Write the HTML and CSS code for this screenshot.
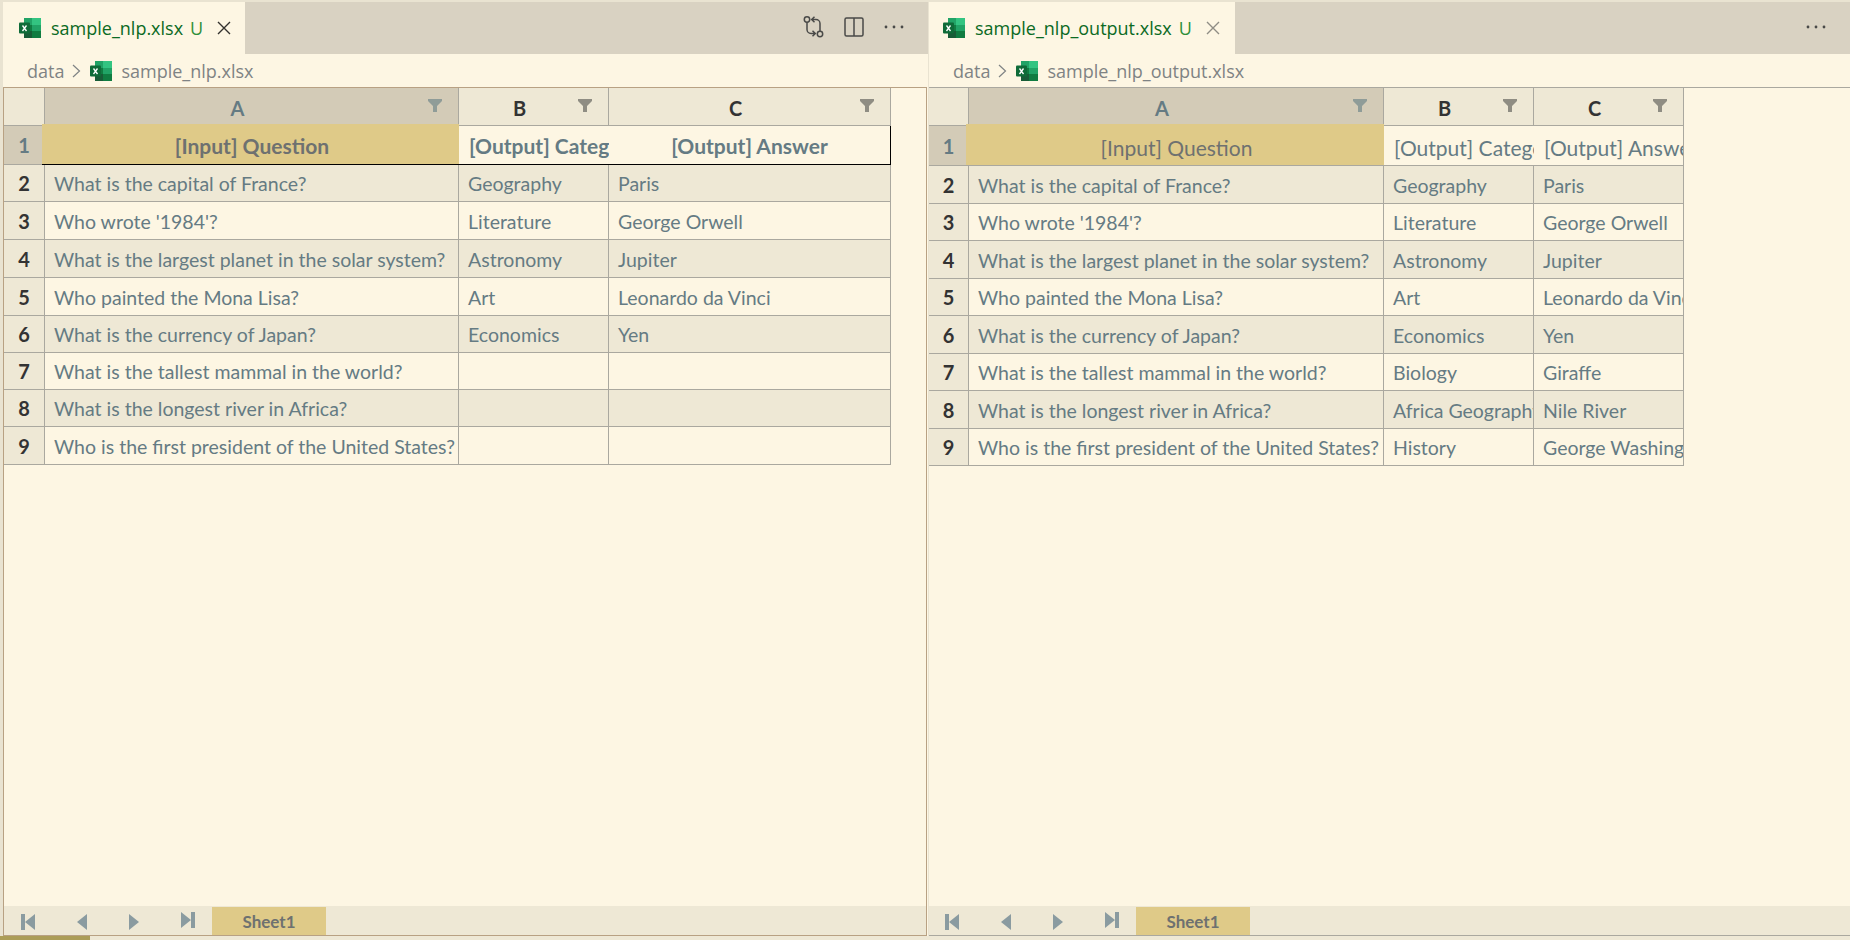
FILE: index.html
```html
<!DOCTYPE html>
<html lang="en">
<head>
<meta charset="utf-8">
<title>sample_nlp</title>
<link rel="stylesheet" href="styles.css">
</head>
<body>
<svg class="defs" width="0" height="0" aria-hidden="true">
  <defs>
    <symbol id="xl" viewBox="0 0 22 20">
      <rect x="5" y="0" width="9" height="7" fill="#21a366"/>
      <rect x="13" y="0" width="9" height="7" fill="#33c481"/>
      <rect x="5" y="7" width="9" height="6" fill="#107c41"/>
      <rect x="13" y="7" width="9" height="6" fill="#21a366"/>
      <rect x="5" y="13" width="9" height="7" fill="#185c37"/>
      <rect x="13" y="13" width="9" height="7" fill="#107c41"/>
      <rect x="0" y="4.500" width="11" height="11" rx="1" fill="#0f6b38"/>
      <path d="M3.500 7.500l4 5.500M7.500 7.500l-4 5.500" stroke="#fff" stroke-width="1.300" fill="none"/>
    </symbol>
    <symbol id="fn" viewBox="0 0 14 13">
      <path d="M0 0h14v2L9 7v6H5V7L0 2z"/>
    </symbol>
    <symbol id="x" viewBox="0 0 14 14">
      <path d="M1 1l12 12M13 1L1 13" stroke="currentColor" stroke-width="1.400" fill="none"/>
    </symbol>
    <symbol id="chev" viewBox="0 0 9 14">
      <path d="M1 1l6.500 6L1 13" stroke="#7f8384" stroke-width="1.200" fill="none"/>
    </symbol>
    <symbol id="dots" viewBox="0 0 20 4">
      <circle cx="2" cy="2" r="1.400"/><circle cx="10" cy="2" r="1.400"/><circle cx="18" cy="2" r="1.400"/>
    </symbol>
    <symbol id="first" viewBox="0 0 14 16">
      <path d="M0 0h4v16H0zM14 0v16L4 8z"/>
    </symbol>
    <symbol id="prev" viewBox="0 0 10 16">
      <path d="M10 0v16L0 8z"/>
    </symbol>
    <symbol id="next" viewBox="0 0 10 16">
      <path d="M0 0v16l10-8z"/>
    </symbol>
    <symbol id="last" viewBox="0 0 14 16">
      <path d="M0 0l10 8-10 8zM10 0h4v16h-4z"/>
    </symbol>
  </defs>
</svg>

<div class="panes">
  <section class="pane pane-a">
    <header class="tabbar">
      <div class="tab tab-a">
        <svg class="xl"><use href="#xl"/></svg>
        <span class="tab-name">sample_nlp.xlsx</span>
        <span class="tab-u">U</span>
        <svg class="tab-x tab-x-on"><use href="#x"/></svg>
      </div>
      <div class="actions">
        <svg class="act-compare" viewBox="0 0 22 22" fill="none" stroke="#4a4a48" stroke-width="1.500">
          <circle cx="5" cy="3.500" r="2.700"/>
          <circle cx="18" cy="18" r="2.700"/>
          <path d="M5 6.200v7.300a4 4 0 0 0 4 4h4.500M10.500 14.800l2.800 2.700-2.800 2.700"/>
          <path d="M18 15.300V7.500a4 4 0 0 0-4-4H9.500M12.500 .8L9.700 3.500l2.800 2.700"/>
        </svg>
        <svg class="act-split" viewBox="0 0 20 20" fill="none" stroke="#4a4a48" stroke-width="1.500">
          <rect x="1" y="1" width="18" height="18" rx="1.500"/>
          <path d="M10 1v18"/>
        </svg>
        <svg class="act-dots"><use href="#dots"/></svg>
      </div>
    </header>
    <nav class="crumbs">
      <span>data</span>
      <svg class="chev"><use href="#chev"/></svg>
      <svg class="xl"><use href="#xl"/></svg>
      <span class="crumb-file">sample_nlp.xlsx</span>
    </nav>
    <div class="sheet">
      <div class="grid">
        <div class="c corner"></div>
        <div class="c col col-sel">A<svg class="fn"><use href="#fn"/></svg></div>
        <div class="c col">B<svg class="fn"><use href="#fn"/></svg></div>
        <div class="c col">C<svg class="fn"><use href="#fn"/></svg></div>

        <div class="c row row-sel">1</div>
        <div class="c gold bold">[Input] Question</div>
        <div class="c t1 bold t1-left">[Output] Category</div>
        <div class="c t1 t1-end bold t1-center">[Output] Answer</div>

        <div class="c row">2</div>
        <div class="c alt">What is the capital of France?</div>
        <div class="c alt">Geography</div>
        <div class="c alt">Paris</div>

        <div class="c row">3</div>
        <div class="c">Who wrote '1984'?</div>
        <div class="c">Literature</div>
        <div class="c">George Orwell</div>

        <div class="c row">4</div>
        <div class="c alt">What is the largest planet in the solar system?</div>
        <div class="c alt">Astronomy</div>
        <div class="c alt">Jupiter</div>

        <div class="c row">5</div>
        <div class="c">Who painted the Mona Lisa?</div>
        <div class="c">Art</div>
        <div class="c">Leonardo da Vinci</div>

        <div class="c row">6</div>
        <div class="c alt">What is the currency of Japan?</div>
        <div class="c alt">Economics</div>
        <div class="c alt">Yen</div>

        <div class="c row">7</div>
        <div class="c">What is the tallest mammal in the world?</div>
        <div class="c"></div>
        <div class="c"></div>

        <div class="c row">8</div>
        <div class="c alt">What is the longest river in Africa?</div>
        <div class="c alt"></div>
        <div class="c alt"></div>

        <div class="c row">9</div>
        <div class="c">Who is the first president of the United States?</div>
        <div class="c"></div>
        <div class="c"></div>
      </div>
      <footer class="sheetbar">
        <div class="navs">
          <svg class="nav-w"><use href="#first"/></svg>
          <svg class="nav-n"><use href="#prev"/></svg>
          <svg class="nav-n"><use href="#next"/></svg>
          <svg class="nav-w nav-up"><use href="#last"/></svg>
        </div>
        <div class="sheet-tab">Sheet1</div>
      </footer>
    </div>
  </section>

  <section class="pane pane-b">
    <header class="tabbar">
      <div class="tab tab-b">
        <svg class="xl"><use href="#xl"/></svg>
        <span class="tab-name">sample_nlp_output.xlsx</span>
        <span class="tab-u">U</span>
        <svg class="tab-x"><use href="#x"/></svg>
      </div>
      <div class="actions">
        <svg class="act-dots"><use href="#dots"/></svg>
      </div>
    </header>
    <nav class="crumbs">
      <span>data</span>
      <svg class="chev"><use href="#chev"/></svg>
      <svg class="xl"><use href="#xl"/></svg>
      <span class="crumb-file">sample_nlp_output.xlsx</span>
    </nav>
    <div class="sheet">
      <div class="grid">
        <div class="c corner"></div>
        <div class="c col col-sel">A<svg class="fn"><use href="#fn"/></svg></div>
        <div class="c col">B<svg class="fn"><use href="#fn"/></svg></div>
        <div class="c col">C<svg class="fn"><use href="#fn"/></svg></div>

        <div class="c row row-sel">1</div>
        <div class="c gold low">[Input] Question</div>
        <div class="c t1 low t1-left">[Output] Category</div>
        <div class="c t1 low t1-left t1-last">[Output] Answer</div>

        <div class="c row">2</div>
        <div class="c alt">What is the capital of France?</div>
        <div class="c alt">Geography</div>
        <div class="c alt">Paris</div>

        <div class="c row">3</div>
        <div class="c">Who wrote '1984'?</div>
        <div class="c">Literature</div>
        <div class="c">George Orwell</div>

        <div class="c row">4</div>
        <div class="c alt">What is the largest planet in the solar system?</div>
        <div class="c alt">Astronomy</div>
        <div class="c alt">Jupiter</div>

        <div class="c row">5</div>
        <div class="c">Who painted the Mona Lisa?</div>
        <div class="c">Art</div>
        <div class="c">Leonardo da Vinci</div>

        <div class="c row">6</div>
        <div class="c alt">What is the currency of Japan?</div>
        <div class="c alt">Economics</div>
        <div class="c alt">Yen</div>

        <div class="c row">7</div>
        <div class="c">What is the tallest mammal in the world?</div>
        <div class="c">Biology</div>
        <div class="c">Giraffe</div>

        <div class="c row">8</div>
        <div class="c alt">What is the longest river in Africa?</div>
        <div class="c alt">Africa Geography</div>
        <div class="c alt">Nile River</div>

        <div class="c row">9</div>
        <div class="c">Who is the first president of the United States?</div>
        <div class="c">History</div>
        <div class="c">George Washington</div>
      </div>
      <footer class="sheetbar">
        <div class="navs">
          <svg class="nav-w"><use href="#first"/></svg>
          <svg class="nav-n"><use href="#prev"/></svg>
          <svg class="nav-n"><use href="#next"/></svg>
          <svg class="nav-w nav-up"><use href="#last"/></svg>
        </div>
        <div class="sheet-tab">Sheet1</div>
      </footer>
    </div>
  </section>
</div>
<div class="progress"><div class="progress-fill"></div></div>
</body>
</html>
```
FILE: styles.css
```css
* { box-sizing: border-box; }
html, body { margin: 0; height: 100%; }
body {
  width: 1850px;
  height: 940px;
  overflow: hidden;
  background: #e9e3d1;
  display: flex;
  flex-direction: column;
  padding-top: 2px;
  font-family: "Open Sans", sans-serif;
}
.defs { position: absolute; }

.panes { flex: 1; min-height: 0; display: flex; padding-left: 3px; gap: 1px; }
.pane { display: flex; flex-direction: column; min-width: 0; background: #fdf6e3; }
.pane-a { width: 925px; }
.pane-b { flex: 1; }

.tabbar { height: 52px; flex: none; display: flex; justify-content: space-between; background: #d9d2c2; }
.tab { display: flex; align-items: center; background: #fdf6e3; }
.tab-a { width: 242px; padding-left: 16px; }
.tab-b { width: 306px; padding-left: 14px; }
.xl { width: 22px; height: 20px; flex: none; }
.tab-name { margin-left: 10px; font-size: 18px; color: #0b6a23; white-space: nowrap; }
.tab-u { margin-left: 7px; font-size: 18px; color: #2f8f3a; }
.tab-x { width: 14px; height: 14px; margin-left: 14px; color: #8f8d85; }
.tab-x-on { color: #33322e; }

.actions { display: flex; align-items: center; padding-bottom: 3px; padding-right: 24px; gap: 20px; }
.act-compare { width: 22px; height: 22px; }
.act-split { width: 20px; height: 20px; }
.act-dots { width: 20px; height: 4px; fill: #4a4a48; }

.crumbs { height: 33px; flex: none; display: flex; align-items: center; font-size: 18px; color: #7f8384; padding-left: 24px; }
.chev { width: 9px; height: 14px; margin: 0 9px 0 8px; }
.crumb-file { margin-left: 9px; }

.sheet { flex: 1; min-height: 0; display: flex; flex-direction: column; justify-content: space-between; }
.pane-a .sheet { border: 1px solid #b8a183; margin-right: 1px; }
.pane-b .sheet { border-top: 1px solid #aaa89f; border-bottom: 1px solid #aaa89f; }

.grid { display: grid; font-family: Lato, sans-serif; font-size: 19.5px; color: #657b83; }
.pane-a .grid {
  grid-template-columns: 41px 414px 150px 282px;
  grid-template-rows: 38px 39px 37px 38px 38px 38px 37px 37px 37px 38px;
}
.pane-b .grid {
  grid-template-columns: 40px 415px 150px 150px;
  grid-template-rows: 38px 40px 38px 37px 38px 37px 38px 37px 38px 37px;
}

.c {
  display: flex;
  align-items: center;
  padding-left: 9px;
  padding-top: 1px;
  min-width: 0;
  overflow: hidden;
  white-space: nowrap;
  border-right: 1px solid #aaa89f;
  border-bottom: 1px solid #aaa89f;
}
.alt { background: #eee8d5; }
.corner { background: #eee8d5; padding: 0; }
.col {
  position: relative;
  justify-content: center;
  padding: 3px 28px 0 0;
  font-size: 20px;
  font-weight: 700;
  color: #333;
  background: #eee8d5;
}
.col-sel { background: #d3cbb7; color: #657b83; }
.fn { position: absolute; right: 16px; top: 11px; width: 14px; height: 13px; fill: #8f8d83; }
.col-sel .fn { fill: #8f9c98; }
.row { justify-content: center; padding: 0; font-size: 20px; font-weight: 700; color: #333; background: #eee8d5; }
.row-sel { background: #d3cbb7; color: #657b83; }
.gold {
  position: relative;
  margin: -2px 0 0 -3px;
  padding: 3px 0 0 3px;
  justify-content: center;
  font-size: 21px;
  background: #dfca88;
  color: #6e7170;
  border-right: 0;
  border-bottom-color: #000;
  overflow: visible;
}
.bold { font-weight: 700; }
.t1 { border-right: 0; font-size: 21px; padding-top: 1px; }
.low { padding-top: 4px; }
.gold.low { padding-top: 6px; border-bottom-color: #aaa89f; }
.t1-left { padding-left: 10px; }
.pane-a .t1-left { border-bottom-color: #000; }
.t1-center { justify-content: center; padding-left: 0; }
.t1-end { border-right: 1px solid #000; border-bottom-color: #000; }
.t1-last { border-right: 1px solid #aaa89f; }

.sheetbar { height: 29px; flex: none; display: flex; background: #eee8d5; }
.navs { display: flex; align-items: center; gap: 42px; padding-left: 17px; margin-right: 17px; padding-top: 2px; }
.pane-b .navs { padding-left: 16px; }
.nav-w { width: 14px; height: 16px; fill: #8a9ba0; }
.nav-n { width: 10px; height: 16px; fill: #8a9ba0; }
.nav-up { margin-top: -4px; }
.sheet-tab {
  width: 114px;
  margin-top: 1px;
  display: flex;
  align-items: center;
  justify-content: center;
  background: #dfca88;
  font-family: Lato, sans-serif;
  font-size: 17px;
  font-weight: 700;
  color: #6e7170;
}

.progress { height: 4px; flex: none; background: #eee8d5; }
.progress-fill { width: 90px; height: 100%; background: #ac9d57; }
```
